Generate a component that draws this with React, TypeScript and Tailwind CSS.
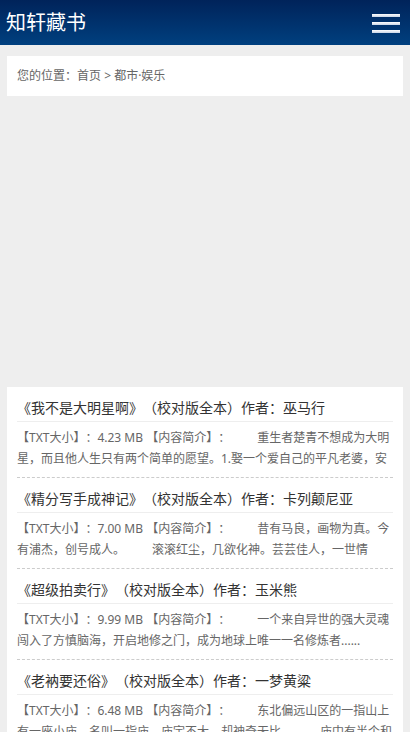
import type { ReactNode } from 'react'

type Book = {
  title: string
  author: string
  size: string
  intro: string
}

const books: Book[] = [
  {
    title: '我不是大明星啊',
    author: '巫马行',
    size: '4.23 MB',
    intro:
      '重生者楚青不想成为大明星，而且他人生只有两个简单的愿望。1.娶一个爱自己的平凡老婆，安安稳稳地过完这一生。2.把上辈子没能完成的事情都做一遍……',
  },
  {
    title: '精分写手成神记',
    author: '卡列颠尼亚',
    size: '7.00 MB',
    intro:
      '昔有马良，画物为真。今有浦杰，创号成人。\u3000\u3000 滚滚红尘，几欲化神。芸芸佳人，一世情缘……',
  },
  {
    title: '超级拍卖行',
    author: '玉米熊',
    size: '9.99 MB',
    intro: '一个来自异世的强大灵魂闯入了方慎脑海，开启地修之门，成为地球上唯一一名修炼者......',
  },
  {
    title: '老衲要还俗',
    author: '一梦黄粱',
    size: '6.48 MB',
    intro:
      '东北偏远山区的一指山上有一座小庙，名叫一指庙，庙宇不大，却神奇无比。\u3000\u3000 庙中有半个和尚，一只猴子，一只狼……',
  },
  {
    title: '全职艺术家',
    author: '我最白',
    size: '8.12 MB',
    intro: '蓝星文艺复兴，平行世界的艺术家们，请开始你们的表演……',
  },
]

function Card({ children, className = '' }: { children: ReactNode; className?: string }) {
  return <div className={`bg-white mx-[7px] ${className}`}>{children}</div>
}

export default function App() {
  return (
    <div className="min-h-screen bg-[#eeeeee] font-['Noto_Sans','Noto_Sans_CJK_SC',sans-serif] [text-spacing-trim:space-all]">
      {/* Header */}
      <header className="h-[45px] bg-gradient-to-b from-[#00235a] to-[#00407f] flex items-center justify-between pl-[6px] pr-[10px]">
        <span className="text-white text-[20px] leading-none">知轩藏书</span>
        <button className="flex flex-col gap-[5px] pt-[1px]" aria-label="菜单">
          <span className="block w-[28px] h-[3px] bg-gradient-to-b from-white to-[#c9d6e8]" />
          <span className="block w-[28px] h-[3px] bg-gradient-to-b from-white to-[#c9d6e8]" />
          <span className="block w-[28px] h-[3px] bg-gradient-to-b from-white to-[#c9d6e8]" />
        </button>
      </header>

      {/* Breadcrumb */}
      <Card className="mt-[11px] h-[40px] flex items-center px-[10px]">
        <p className="text-[12px] text-[#666]">
          您的位置：<a href="#">首页</a>&nbsp;&gt;&nbsp;<a href="#">都市·娱乐</a>
        </p>
      </Card>

      {/* Ad slot */}
      <div className="h-[291px]" />

      {/* Book list */}
      <Card className="px-[10px]">
        {books.map(b => (
          <div key={b.title} className="pt-[7px] border-b border-dashed border-[#cccccc]">
            <h3 className="text-[14px] leading-[27px] text-[#333] border-b border-[#eeeeee] whitespace-nowrap overflow-hidden">
              《{b.title}》（校对版全本）作者：{b.author}
            </h3>
            <p className="mt-[5px] mb-[8px] h-[42px] overflow-hidden text-[12px] leading-[21px] text-[#666]">
              【TXT大小】：{b.size} 【内容简介】：{'\u3000\u3000 '}
              {b.intro}
            </p>
          </div>
        ))}
      </Card>
    </div>
  )
}
